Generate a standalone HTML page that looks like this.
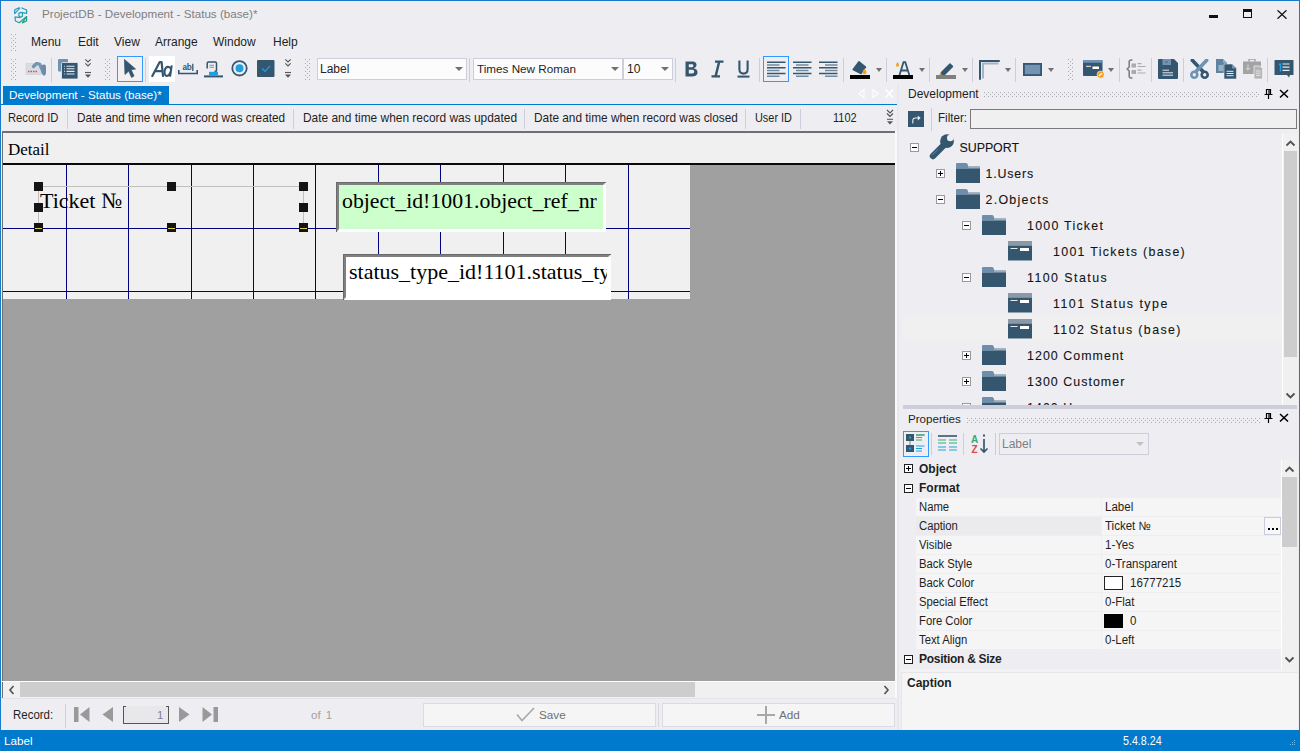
<!DOCTYPE html>
<html><head><meta charset="utf-8">
<style>
*{box-sizing:border-box;margin:0;padding:0}
html,body{width:1300px;height:751px;overflow:hidden;background:#EEEEF2;font-family:"Liberation Sans",sans-serif;font-size:12px;color:#1E1E1E}
.a{position:absolute}
.t{position:absolute;white-space:nowrap;line-height:14px}
.sep{position:absolute;width:1px;background:#CCCEDB}
.grip{position:absolute;width:5px;background:conic-gradient(at 1px 1px,transparent 75%,#A9A9B1 0) 0 0/4px 4px,conic-gradient(at 1px 1px,transparent 75%,#A9A9B1 0) 2px 2px/4px 4px}
.ddarr{position:absolute;width:0;height:0;border-left:4px solid transparent;border-right:4px solid transparent;border-top:4px solid #717171}
.hg{position:absolute;background:#000080}
.hd{position:absolute;width:9px;height:9px;background:#141414}
.tree{position:absolute;white-space:nowrap;font-size:12.4px;letter-spacing:1.05px;line-height:14px;color:#141414;-webkit-text-stroke:0.1px #141414}
.bx{position:absolute;width:9px;height:9px;border:1px solid #9A9A9A;background:#FCFCFC}
.bx:before{content:"";position:absolute;left:1px;top:3px;width:5px;height:1px;background:#000}
.bx.p:after{content:"";position:absolute;left:3px;top:1px;width:1px;height:5px;background:#000}
.pr{position:absolute;left:916px;width:365px;height:18px;background:#F5F5F5}
.pv{position:absolute;left:1101px;width:180px;height:18px;background:#F5F5F5}
.pn{position:absolute;white-space:nowrap;line-height:14px;left:919px;transform:scaleX(.94);transform-origin:0 0}
.pvv{position:absolute;white-space:nowrap;line-height:14px;left:1105px;transform:scaleX(.96);transform-origin:0 0}
</style></head><body>
<!-- window border -->
<div class="a" style="left:0;top:0;width:1300px;height:751px;border:1px solid #1979CA;border-bottom:none"></div>

<!-- TITLE BAR -->
<svg class="a" style="left:14px;top:7px" width="14" height="17" viewBox="0 0 14 17">
 <defs><linearGradient id="lg" gradientUnits="userSpaceOnUse" x1="0" y1="0" x2="13" y2="17"><stop offset="0" stop-color="#1E9BE6"/><stop offset="0.55" stop-color="#20A0B0"/><stop offset="1" stop-color="#2E9E63"/></linearGradient></defs>
 <g fill="none" stroke="url(#lg)" stroke-width="1.25" stroke-linejoin="round">
 <path d="M0.7 6.6 V2.7 L5 0.7 L5.6 1.4 Z"/>
 <path d="M7.4 0.7 L12.6 3 V6.3 L6.7 5.3 L4.9 6.4 V9.1 L6.6 10.2 L8.4 9.2 V6.3"/>
 <path d="M0.6 9.8 L6.4 10.7 M0.9 10 L1.5 14 L5.3 15.8 L12.6 9.6"/>
 <path d="M8.3 15.8 L12.6 14 V9.6 Z"/>
 </g>
</svg>
<div class="t" style="left:42px;top:7px;color:#7F7F7F;font-size:11.65px">ProjectDB - Development - Status (base)*</div>
<div class="a" style="left:1209px;top:15px;width:9px;height:3px;background:#111"></div>
<div class="a" style="left:1243px;top:9px;width:9px;height:9px;border:1px solid #111;border-top:3px solid #111"></div>
<svg class="a" style="left:1277px;top:10px" width="10" height="9" viewBox="0 0 10 9"><path d="M0.5 0.3 L9.5 8.7 M9.5 0.3 L0.5 8.7" stroke="#111" stroke-width="1.3"/></svg>

<!-- MENU BAR -->
<div class="grip" style="left:11px;top:34px;height:17px"></div>
<div class="t" style="left:31px;top:35px">Menu</div>
<div class="t" style="left:78px;top:35px">Edit</div>
<div class="t" style="left:114px;top:35px">View</div>
<div class="t" style="left:155px;top:35px">Arrange</div>
<div class="t" style="left:213px;top:35px">Window</div>
<div class="t" style="left:273px;top:35px">Help</div>

<!-- TOOLBAR -->
<div class="grip" style="left:11px;top:59px;height:22px"></div>
<svg class="a" style="left:25px;top:62px" width="22" height="14" viewBox="0 0 22 14">
 <rect x="1" y="1.5" width="15" height="11" fill="#D9DDE1" stroke="#C8CCD0" stroke-width="0.6"/>
 <path d="M3 9.5h1.5M5.5 9.5h1.5M8 9.5h1.5M10.5 9.5h1.5" stroke="#E0474C" stroke-width="1.4"/>
 <path d="M8.5 4.5 L11.5 1.5 L14.5 2 L18 9.5 L19 12" fill="none" stroke="#7393B3" stroke-width="3.2" stroke-linecap="round" stroke-linejoin="round"/>
 <rect x="16.5" y="2.5" width="4.5" height="10" rx="2" fill="#6B8BAA"/>
</svg>
<div class="sep" style="left:51px;top:58px;height:24px"></div>
<svg class="a" style="left:58px;top:59px" width="20" height="20" viewBox="0 0 20 20">
 <rect x="0" y="0" width="10" height="12.5" rx="1" fill="#6E93B3"/>
 <rect x="3.5" y="3.5" width="16.5" height="16.5" rx="1.2" fill="#34566F" stroke="#EEEEF2" stroke-width="0.8"/>
 <path d="M6.2 7.2h0.8M8.5 7.2h8M6.2 9.8h0.8M8.5 9.8h8M6.2 12.4h0.8M8.5 12.4h8M6.2 15h0.8M8.5 15h8" stroke="#E6EBEF" stroke-width="1.1"/>
</svg>
<svg class="a" style="left:84px;top:58px" width="8" height="21" viewBox="0 0 8 21">
 <path d="M1.3 1.3 L4 4 L6.7 1.3 M1.3 5.3 L4 8 L6.7 5.3" fill="none" stroke="#555" stroke-width="1.1"/>
 <path d="M1 14.5 H7" stroke="#555" stroke-width="1.1"/><path d="M1 16.5 H7 L4 19.8 Z" fill="#555"/>
</svg>
<div class="grip" style="left:105px;top:59px;height:22px"></div>
<div class="a" style="left:117px;top:56px;width:26px;height:26px;border:1px solid #3399FF;background:#F2F0F0"></div>
<svg class="a" style="left:123px;top:59px" width="14" height="20" viewBox="0 0 14 20">
 <path d="M1.5 0.5 L12.5 10 L8 10.6 L11 17 L8.6 18.4 L5.7 12 L2 15.5 Z" fill="#34566F" stroke="#34566F" stroke-width="0.8" stroke-linejoin="round"/>
</svg>
<div class="sep" style="left:145px;top:58px;height:24px"></div>
<div class="a" style="left:149px;top:56px;width:26px;height:26px;background:#FFFFFF"></div>
<svg class="a" style="left:151px;top:61px" width="23" height="16" viewBox="0 0 23 16">
 <path d="M1.3 15 L8.6 1.2 L10.6 1.2 L12 15 M4 10.2 H11.4" fill="none" stroke="#34566F" stroke-width="2.2" stroke-linejoin="round" stroke-linecap="round"/>
 <path d="M20.6 5.2 L19.2 14.8 M20 8.6 C19.4 5.6 16.5 5.2 15 6.7 C13.2 8.6 13 12.8 14.4 14.2 C15.9 15.6 18.6 14.8 19.4 11" fill="none" stroke="#34566F" stroke-width="2.1" stroke-linecap="round"/>
</svg>
<svg class="a" style="left:178px;top:63px" width="20" height="12" viewBox="0 0 20 12">
 <text x="4.5" y="7.3" font-family="Liberation Sans" font-size="8.2" font-weight="bold" fill="#34566F" letter-spacing="-0.2">ab</text>
 <path d="M14.8 0.8 V8" stroke="#34566F" stroke-width="1.3"/>
 <path d="M0.8 7 V10.5 H19.2 V7" fill="none" stroke="#34566F" stroke-width="1.6"/>
</svg>
<svg class="a" style="left:204px;top:61px" width="19" height="17" viewBox="0 0 19 17">
 <path d="M3.2 7.5 V2.3 Q3.2 1 4.5 1 H11.2 Q12.5 1 12.5 2.3 V9.5 Q12.5 10.3 11.7 10.3 H10.5" fill="none" stroke="#34566F" stroke-width="1.5"/>
 <path d="M5.5 4.3 H10 M5.5 6.3 H10" stroke="#7393B3" stroke-width="1"/>
 <rect x="5" y="10.8" width="9" height="3.4" fill="#1BA1E2"/>
 <rect x="0" y="14.4" width="19" height="2" fill="#34566F"/>
</svg>
<svg class="a" style="left:230px;top:60px" width="19" height="17" viewBox="0 0 19 17">
 <circle cx="9.5" cy="8.3" r="7.2" fill="none" stroke="#34566F" stroke-width="1.8"/>
 <circle cx="9.5" cy="8.3" r="4" fill="#1BA1E2"/>
</svg>
<svg class="a" style="left:257px;top:60px" width="18" height="17" viewBox="0 0 18 17">
 <rect x="0" y="0" width="17.5" height="17" rx="1" fill="#34566F"/>
 <path d="M5 8.5 L8 11.3 L13 5.8" fill="none" stroke="#1BA1E2" stroke-width="1.2"/>
</svg>
<svg class="a" style="left:284px;top:58px" width="8" height="21" viewBox="0 0 8 21">
 <path d="M1.3 1.3 L4 4 L6.7 1.3 M1.3 5.3 L4 8 L6.7 5.3" fill="none" stroke="#555" stroke-width="1.1"/>
 <path d="M1 14.5 H7" stroke="#555" stroke-width="1.1"/><path d="M1 16.5 H7 L4 19.8 Z" fill="#555"/>
</svg>
<div class="grip" style="left:305px;top:59px;height:22px"></div>
<!-- combos -->
<div class="a" style="left:317px;top:58px;width:150px;height:22px;border:1px solid #CCCEDB;background:#FCFCFC"></div>
<div class="t" style="left:320px;top:62px">Label</div>
<div class="ddarr" style="left:455px;top:67px"></div>
<div class="sep" style="left:469px;top:58px;height:24px"></div>
<div class="a" style="left:473px;top:58px;width:150px;height:22px;border:1px solid #CCCEDB;background:#FCFCFC"></div>
<div class="t" style="left:477px;top:62px;font-size:11.7px">Times New Roman</div>
<div class="ddarr" style="left:611px;top:67px"></div>
<div class="a" style="left:623px;top:58px;width:50px;height:22px;border:1px solid #CCCEDB;background:#FCFCFC"></div>
<div class="t" style="left:627px;top:62px">10</div>
<div class="ddarr" style="left:661px;top:67px"></div>
<div class="sep" style="left:675px;top:58px;height:24px"></div>
<!-- B I U -->
<svg class="a" style="left:684px;top:60px" width="15" height="18" viewBox="0 0 15 18">
 <path d="M1.5 1.5 H8 C11.5 1.5 12.5 3.2 12.5 5 C12.5 6.8 11.3 7.8 9.5 8.2 C12 8.5 13.5 10 13.5 12.3 C13.5 14.6 12 16.5 8.5 16.5 H1.5 Z" fill="#34566F"/>
 <path d="M4.8 4.3 H7.8 C9 4.3 9.4 5 9.4 5.8 C9.4 6.6 9 7.2 7.8 7.2 H4.8 Z M4.8 9.8 H8.3 C9.6 9.8 10.2 10.5 10.2 11.6 C10.2 12.7 9.6 13.6 8.3 13.6 H4.8 Z" fill="#EEEEF2"/>
</svg>
<svg class="a" style="left:711px;top:60px" width="13" height="18" viewBox="0 0 13 18">
 <path d="M4 1.6 H12.5 M0.5 16.4 H9 M8.2 1.6 L4.6 16.4" fill="none" stroke="#34566F" stroke-width="2.4"/>
</svg>
<svg class="a" style="left:737px;top:60px" width="13" height="18" viewBox="0 0 13 18">
 <path d="M2.4 0.5 V9.3 C2.4 12.2 4 13.6 6.5 13.6 C9 13.6 10.6 12.2 10.6 9.3 V0.5" fill="none" stroke="#34566F" stroke-width="2.1"/>
 <rect x="0.5" y="15.6" width="12" height="2" fill="#34566F"/>
</svg>
<div class="sep" style="left:759px;top:58px;height:24px"></div>
<div class="a" style="left:763px;top:56px;width:26px;height:26px;border:1px solid #3399FF"></div>
<svg class="a" style="left:767px;top:61px" width="19" height="17" viewBox="0 0 19 17"><path d="M0 1.2 H18.5 M0 6.8 H18.5 M0 12.4 H18.5" stroke="#34566F" stroke-width="1.5"/><path d="M0 4.0 H12.5 M0 9.6 H12.5 M0 15.2 H12.5" stroke="#6F8BA3" stroke-width="1.5"/></svg>
<svg class="a" style="left:793px;top:61px" width="19" height="17" viewBox="0 0 19 17"><path d="M0 1.2 H18.5 M0 6.8 H18.5 M0 12.4 H18.5" stroke="#34566F" stroke-width="1.5"/><path d="M3 4.0 H15.5 M3 9.6 H15.5 M3 15.2 H15.5" stroke="#6F8BA3" stroke-width="1.5"/></svg>
<svg class="a" style="left:819px;top:61px" width="19" height="17" viewBox="0 0 19 17"><path d="M0 1.2 H18.5 M0 6.8 H18.5 M0 12.4 H18.5" stroke="#34566F" stroke-width="1.5"/><path d="M6 4.0 H18.5 M6 9.6 H18.5 M6 15.2 H18.5" stroke="#6F8BA3" stroke-width="1.5"/></svg>
<div class="sep" style="left:843px;top:58px;height:24px"></div>
<!-- fill -->
<svg class="a" style="left:850px;top:61px" width="21" height="18" viewBox="0 0 21 18">
 <path d="M9 0.8 L15.5 6 L11 12.5 L3.2 8.5 Z" fill="#34566F" stroke="#34566F" stroke-width="1.5" stroke-linejoin="round"/>
 <path d="M14.5 7.5 C13 9.5 12.5 10.5 12.5 11.5 C12.5 12.5 13.5 13.3 14.5 13.3 C15.5 13.3 16.5 12.5 16.5 11.5 C16.5 10.5 16 9.5 14.5 7.5 Z" fill="#F4A11D"/>
 <rect x="0" y="14" width="20" height="4" fill="#000"/>
</svg>
<div class="ddarr" style="left:876px;top:68px;border-width:4px 3.5px 0 3.5px"></div>
<div class="sep" style="left:886px;top:58px;height:24px"></div>
<svg class="a" style="left:893px;top:61px" width="21" height="18" viewBox="0 0 21 18">
 <path d="M4.5 1 C3.5 2.5 3 3.3 3 4.2 C3 5 3.7 5.7 4.5 5.7 C5.3 5.7 6 5 6 4.2 C6 3.3 5.5 2.5 4.5 1 Z" fill="#F4A11D"/>
 <path d="M6.5 14 L10.5 1.2 L12.3 1.2 L16.3 14 M8 9.5 H14.8" fill="none" stroke="#34566F" stroke-width="1.8"/>
 <rect x="0" y="14" width="20" height="4" fill="#000"/>
</svg>
<div class="ddarr" style="left:919px;top:68px;border-width:4px 3.5px 0 3.5px"></div>
<div class="sep" style="left:929px;top:58px;height:24px"></div>
<svg class="a" style="left:936px;top:61px" width="21" height="18" viewBox="0 0 21 18">
 <path d="M5.5 11.5 L14 3 L16.5 5.5 L8 14 L5 14 Z" fill="#34566F" stroke="#34566F" stroke-width="1.5" stroke-linejoin="round"/>
 <path d="M3.5 12.5 L5.5 12.5 L5.5 14 L3.5 14 Z" fill="#F4A11D"/>
 <rect x="0" y="14" width="20" height="4" fill="#808080"/>
</svg>
<div class="ddarr" style="left:962px;top:68px;border-width:4px 3.5px 0 3.5px"></div>
<div class="sep" style="left:972px;top:58px;height:24px"></div>
<svg class="a" style="left:978px;top:59px" width="22" height="21" viewBox="0 0 22 21">
 <path d="M2 20 V2 H21" fill="none" stroke="#34566F" stroke-width="2" stroke-linecap="round"/>
 <path d="M5 19.5 V4.5 H20.5" fill="none" stroke="#A4B4C4" stroke-width="2"/>
</svg>
<div class="ddarr" style="left:1005px;top:68px;border-width:4px 3.5px 0 3.5px"></div>
<div class="sep" style="left:1015px;top:58px;height:24px"></div>
<svg class="a" style="left:1023px;top:63px" width="19" height="13" viewBox="0 0 19 13">
 <rect x="0.9" y="0.9" width="17.2" height="11.2" fill="#7393B3" stroke="#34566F" stroke-width="1.8"/>
</svg>
<div class="ddarr" style="left:1048px;top:68px;border-width:4px 3.5px 0 3.5px"></div>
<div class="grip" style="left:1068px;top:59px;height:22px"></div>
<svg class="a" style="left:1083px;top:60px" width="22" height="19" viewBox="0 0 22 19">
 <rect x="0" y="0" width="19.5" height="16" rx="1" fill="#34566F"/>
 <rect x="0" y="0" width="19.5" height="2.8" rx="0.8" fill="#6E93B3"/>
 <path d="M3 6.3 H8" stroke="#E6EBEF" stroke-width="1"/>
 <rect x="9.5" y="6.5" width="6.5" height="2.5" fill="#FFFFFF"/>
 <circle cx="17.6" cy="14.6" r="3.6" fill="#F4A11D" stroke="#EEEEF2" stroke-width="0.6"/>
 <path d="M16 15.8 L19 13.2" stroke="#fff" stroke-width="1.2"/>
</svg>
<div class="ddarr" style="left:1108px;top:68px;border-width:4px 3.5px 0 3.5px"></div>
<div class="sep" style="left:1119px;top:58px;height:24px"></div>
<svg class="a" style="left:1126px;top:59px" width="21" height="20" viewBox="0 0 21 20">
 <path d="M6.5 1 H5 Q3.2 1 3.2 3 V8 L1.2 10 L3.2 12 V17 Q3.2 19 5 19 H6.5" fill="none" stroke="#808080" stroke-width="1.6"/>
 <rect x="5.5" y="4.5" width="4.5" height="4" fill="#ABABAB"/><rect x="5.5" y="11" width="4.5" height="4" fill="#ABABAB"/>
 <path d="M11.5 4.7 H15.5 M11.5 7.5 H19.5 M11.5 11.2 H15.5 M11.5 14 H19.5" stroke="#ABABAB" stroke-width="1.2"/>
</svg>
<div class="sep" style="left:1151px;top:58px;height:24px"></div>
<svg class="a" style="left:1158px;top:59px" width="20" height="20" viewBox="0 0 20 20">
 <path d="M1 0 H16 L20 4 V19 Q20 20 19 20 H1 Q0 20 0 19 V1 Q0 0 1 0 Z" fill="#34566F"/>
 <rect x="4.5" y="0" width="8.5" height="6" fill="#7393B3"/>
 <path d="M7.5 3 H9.5" stroke="#34566F" stroke-width="1"/>
 <path d="M4.5 11.2 H11 M4.5 13.8 H15 M4.5 16.2 H15" stroke="#E6EBEF" stroke-width="1"/>
</svg>
<div class="sep" style="left:1183px;top:58px;height:24px"></div>
<svg class="a" style="left:1190px;top:59px" width="19" height="20" viewBox="0 0 19 20">
 <path d="M2.3 1.3 L13 12.5" stroke="#34566F" stroke-width="3.6" stroke-linecap="round"/>
 <path d="M16.7 1.3 L6 12.5" stroke="#6E93B3" stroke-width="3.6" stroke-linecap="round"/>
 <circle cx="4.3" cy="15.7" r="3" fill="none" stroke="#6E93B3" stroke-width="2.6"/>
 <circle cx="14.7" cy="15.7" r="3" fill="none" stroke="#34566F" stroke-width="2.6"/>
 <circle cx="9.5" cy="8.5" r="0.9" fill="#6E93B3"/>
</svg>
<svg class="a" style="left:1216px;top:59px" width="21" height="20" viewBox="0 0 21 20">
 <path d="M0 0 H7 L11 4 V14 H0 Z" fill="#5F84A2"/>
 <path d="M7 0 L11 4 H7 Z" fill="#8FAAC0"/>
 <path d="M2.5 7 H7 M2.5 9 H7 M2.5 11 H7" stroke="#E6EBEF" stroke-width="0.9"/>
 <path d="M8 5 H16 L20.5 9.5 V20 H8 Z" fill="#34566F" stroke="#EEEEF2" stroke-width="0.6"/>
 <path d="M16 5 L20.5 9.5 H16 Z" fill="#7393B3"/>
 <path d="M10.5 12.3 H17.5 M10.5 14.5 H17.5 M10.5 16.7 H17.5" stroke="#E6EBEF" stroke-width="1"/>
</svg>
<svg class="a" style="left:1242px;top:59px" width="21" height="20" viewBox="0 0 21 20">
 <path d="M1 2.5 H19 V15 H1 Z" fill="#A3A3A3"/>
 <path d="M7 2.5 V1 Q7 0 8 0 H12 Q13 0 13 1 V2.5" fill="none" stroke="#A3A3A3" stroke-width="1.5"/>
 <path d="M6 5.5 V11 M3.8 9 L6 11.2 L8.2 9" fill="none" stroke="#D8D8D8" stroke-width="1"/>
 <path d="M12 7 H18 L20.5 9.5 V20 H12 Z" fill="#B5B5B5" stroke="#EEEEF2" stroke-width="0.8"/>
 <path d="M14 12 H18.5 M14 14.2 H18.5 M14 16.4 H18.5" stroke="#E8E8E8" stroke-width="0.9"/>
</svg>
<div class="sep" style="left:1267px;top:58px;height:24px"></div>
<svg class="a" style="left:1274px;top:59px" width="20" height="21" viewBox="0 0 20 21">
 <path d="M1 1 H19 Q19.5 1 19.5 1.5 V15.5 Q19.5 16 19 16 H16 L15 18.5 L13 16 H1 Q0.5 16 0.5 15.5 V1.5 Q0.5 1 1 1 Z" fill="#34566F"/>
 <path d="M6.5 4.5 V12.5 M5 6 L6.5 4.5" fill="none" stroke="#1BA1E2" stroke-width="1.5"/>
 <path d="M8.5 5 H15.5 M8.5 8.2 H15.5 M8.5 11.4 H15.5" stroke="#E6EBEF" stroke-width="1.2"/>
</svg>


<!-- DOCUMENT TAB -->
<div class="a" style="left:3px;top:86px;width:166px;height:18px;background:#007ACC"></div>
<div class="t" style="left:9px;top:88px;color:#fff;font-size:11.65px">Development - Status (base)*</div>
<div class="a" style="left:1px;top:104px;width:896px;height:1px;background:#007ACC"></div>
<svg class="a" style="left:858px;top:89px" width="36" height="9" viewBox="0 0 36 9">
 <path d="M6 0.5 L1 4.5 L6 8.5 Z" fill="none" stroke="#FFFFFF" stroke-width="1.1"/>
 <path d="M15 0.5 L20 4.5 L15 8.5 Z" fill="none" stroke="#FFFFFF" stroke-width="1.1"/>
 <path d="M27.5 0.5 L35 8.5 M35 0.5 L27.5 8.5" stroke="#FFFFFF" stroke-width="1.6"/>
</svg>

<!-- RECORD HEADER BAR -->
<div class="t hdr" style="left:8px;top:111px;font-size:12.4px;transform:scaleX(0.902);transform-origin:0 0">Record ID</div>
<div class="sep" style="left:67px;top:109px;height:20px"></div>
<div class="t hdr" style="left:77px;top:111px;font-size:12.4px;transform:scaleX(0.95);transform-origin:0 0">Date and time when record was created</div>
<div class="sep" style="left:293px;top:109px;height:20px"></div>
<div class="t hdr" style="left:303px;top:111px;font-size:12.4px;transform:scaleX(0.962);transform-origin:0 0">Date and time when record was updated</div>
<div class="sep" style="left:524px;top:109px;height:20px"></div>
<div class="t hdr" style="left:534px;top:111px;font-size:12.4px;transform:scaleX(0.955);transform-origin:0 0">Date and time when record was closed</div>
<div class="sep" style="left:745px;top:109px;height:20px"></div>
<div class="t hdr" style="left:755px;top:111px;font-size:12.4px;transform:scaleX(0.88);transform-origin:0 0">User ID</div>
<div class="sep" style="left:800px;top:109px;height:20px"></div>
<div class="t hdr" style="left:833px;top:111px;font-size:12.4px;transform:scaleX(0.885);transform-origin:0 0">1102</div>
<svg class="a" style="left:886px;top:109px" width="8" height="17" viewBox="0 0 8 17">
 <path d="M1 1 L4 4 L7 1 M1 4.5 L4 7.5 L7 4.5" fill="none" stroke="#555" stroke-width="1.2"/>
 <path d="M1 10.3 H7" stroke="#555" stroke-width="1"/><path d="M1 12.2 H7 L4 15.5 Z" fill="#555"/>
</svg>

<!-- FORM AREA -->
<!-- form frame -->
<div class="a" style="left:2px;top:131px;width:894px;height:550px;background:#A0A0A0"></div>
<div class="a" style="left:2px;top:131px;width:894px;height:2px;background:#6F6F6F"></div>
<div class="a" style="left:2px;top:131px;width:1px;height:567px;background:#6F6F6F"></div>
<div class="a" style="left:895px;top:131px;width:2px;height:567px;background:#FAFAFA"></div>
<div class="a" style="left:3px;top:133px;width:892px;height:30px;background:#F0F0F0"></div>
<div class="t" style="left:8px;top:141px;font-family:'Liberation Serif',serif;font-size:17px;line-height:18px;color:#000">Detail</div>
<div class="a" style="left:3px;top:163px;width:892px;height:2px;background:#0A0A0A"></div>
<!-- grid -->
<div class="a" style="left:3px;top:165px;width:687px;height:134px;background:#F0F0F0"></div>
<div class="hg" style="left:66px;top:165px;width:1px;height:134px"></div>
<div class="hg" style="left:128px;top:165px;width:1px;height:134px"></div>
<div class="hg" style="left:191px;top:165px;width:1px;height:134px"></div>
<div class="hg" style="left:253px;top:165px;width:1px;height:134px"></div>
<div class="hg" style="left:315px;top:165px;width:1px;height:134px"></div>
<div class="hg" style="left:378px;top:165px;width:1px;height:134px"></div>
<div class="hg" style="left:440px;top:165px;width:1px;height:134px"></div>
<div class="hg" style="left:503px;top:165px;width:1px;height:134px"></div>
<div class="hg" style="left:565px;top:165px;width:1px;height:134px"></div>
<div class="hg" style="left:628px;top:165px;width:1px;height:134px"></div>
<div class="hg" style="left:3px;top:228px;width:687px;height:1px"></div>
<div class="hg" style="left:3px;top:291px;width:687px;height:1px"></div>
<!-- label selection -->
<div class="a" style="left:38px;top:186px;width:266px;height:42px;border:1px solid #C0C0C0;border-bottom:none"></div>
<div class="t" style="left:40px;top:189px;font-family:'Liberation Serif',serif;font-size:22px;line-height:24px;color:#000">Ticket №</div>
<div class="hd" style="left:34px;top:182px"></div>
<div class="hd" style="left:167px;top:182px"></div>
<div class="hd" style="left:299px;top:182px"></div>
<div class="hd" style="left:34px;top:203px"></div>
<div class="hd" style="left:299px;top:203px"></div>
<div class="hd" style="left:34px;top:223px"></div>
<div class="hd" style="left:167px;top:223px"></div>
<div class="hd" style="left:299px;top:223px"></div>
<div class="a" style="left:35px;top:228px;width:7px;height:1px;background:#E0D040"></div>
<div class="a" style="left:168px;top:228px;width:7px;height:1px;background:#E0D040"></div>
<div class="a" style="left:300px;top:228px;width:7px;height:1px;background:#E0D040"></div>
<!-- textbox 1 -->
<div class="a" style="left:336px;top:182px;width:270px;height:50px;background:#CCFFCC;border-style:solid;border-width:3px 3px 3px 3px;border-color:#808080 #F0F0F0 #F0F0F0 #808080"></div>
<div class="a" style="left:336px;top:182px;width:270px;height:1px;background:#6A6A6A"></div>
<div class="a" style="left:336px;top:182px;width:1px;height:50px;background:#6A6A6A"></div>
<div class="a" style="left:339px;top:229px;width:267px;height:3px;background:#FFFFFF"></div>
<div class="a" style="left:603px;top:185px;width:3px;height:47px;background:#FFFFFF"></div>
<div class="t" style="left:342px;top:189px;font-family:'Liberation Serif',serif;font-size:21.8px;line-height:24px;color:#000">object_id!1001.object_ref_nr</div>
<!-- textbox 2 -->
<div class="a" style="left:343px;top:254px;width:268px;height:46px;background:#FFFFFF;border-style:solid;border-width:3px 3px 3px 3px;border-color:#808080 #F0F0F0 #F0F0F0 #808080;overflow:hidden">
 <div class="t" style="left:3px;top:3px;font-family:'Liberation Serif',serif;font-size:22px;line-height:24px;color:#000">status_type_id!1101.status_type</div>
</div>
<div class="a" style="left:343px;top:254px;width:268px;height:1px;background:#6A6A6A"></div>
<div class="a" style="left:343px;top:254px;width:1px;height:46px;background:#6A6A6A"></div>
<div class="a" style="left:607px;top:257px;width:4px;height:43px;background:#FFFFFF"></div>
<div class="a" style="left:346px;top:297px;width:265px;height:3px;background:#FFFFFF"></div>
<!-- h scrollbar -->
<div class="a" style="left:2px;top:681px;width:894px;height:1px;background:#FFFFFF"></div>
<div class="a" style="left:3px;top:682px;width:892px;height:16px;background:#F0F0F0"></div>
<div class="a" style="left:20px;top:682px;width:675px;height:15px;background:#CDCDCD"></div>
<svg class="a" style="left:8px;top:685px" width="8" height="10" viewBox="0 0 8 10"><path d="M5.5 1 L2 5 L5.5 9" fill="none" stroke="#505050" stroke-width="1.6"/></svg>
<svg class="a" style="left:882px;top:685px" width="8" height="10" viewBox="0 0 8 10"><path d="M2.5 1 L6 5 L2.5 9" fill="none" stroke="#505050" stroke-width="1.6"/></svg>
<div class="a" style="left:2px;top:698px;width:894px;height:1px;background:#E4E4E7"></div>
<!-- nav bar -->
<div class="t" style="left:13px;top:708px;font-size:12.4px;transform:scaleX(.925);transform-origin:0 0">Record:</div>
<div class="sep" style="left:65px;top:704px;height:24px;background:#D0D0D8"></div>
<svg class="a" style="left:73px;top:706px" width="147" height="17" viewBox="0 0 147 17">
 <rect x="1" y="1" width="4.5" height="15" fill="#999"/><path d="M16.5 1 L7 8.5 L16.5 16 Z" fill="#999"/>
 <path d="M40 1 L29.5 8.5 L40 16 Z" fill="#999"/>
 <path d="M106 1 L116.5 8.5 L106 16 Z" fill="#999"/>
 <path d="M129.5 1 L139 8.5 L129.5 16 Z" fill="#999"/><rect x="140.5" y="1" width="4.5" height="15" fill="#999"/>
</svg>
<div class="a" style="left:123px;top:706px;width:46px;height:18px;border:1px solid #555;border-top:none;background:#E8E8EA;box-shadow:inset 0 1px 0 #E8E8EA"></div><div class="a" style="left:123px;top:706px;width:3px;height:1px;background:#555"></div><div class="a" style="left:166px;top:706px;width:3px;height:1px;background:#555"></div>
<div class="t" style="left:157px;top:708px;font-size:11.5px;color:#8080A0">1</div>
<div class="t" style="left:311px;top:708px;font-size:11.5px;color:#A0A0A0;word-spacing:2px">of 1</div>
<div class="a" style="left:423px;top:703px;width:233px;height:24px;border:1px solid #DADAE2;background:#F5F5F5"></div>
<svg class="a" style="left:516px;top:707px" width="19" height="15" viewBox="0 0 19 15"><path d="M1 7.5 L6 13.5 L18 1" fill="none" stroke="#A8A8A8" stroke-width="1.6"/></svg>
<div class="t" style="left:539px;top:708px;font-size:11.7px;color:#707070">Save</div>
<div class="sep" style="left:658px;top:703px;height:24px;background:#D8D8E0"></div>
<div class="a" style="left:662px;top:703px;width:233px;height:24px;border:1px solid #DADAE2;background:#F5F5F5"></div>
<svg class="a" style="left:757px;top:706px" width="18" height="18" viewBox="0 0 18 18"><path d="M9 0 V18 M0 9 H18" stroke="#A8A8A8" stroke-width="2"/></svg>
<div class="t" style="left:779px;top:708px;font-size:11.7px;color:#707070">Add</div>


<!-- RIGHT PANEL -->
<!-- divider -->
<div class="a" style="left:897px;top:84px;width:2px;height:646px;background:#E7E7ED"></div>
<!-- Development header -->
<div class="t" style="left:908px;top:87px;color:#1E1E1E">Development</div>
<div class="a" style="left:984px;top:92px;width:276px;height:5px;background:conic-gradient(at 1px 1px,transparent 75%,#A9A9B1 0) 0 0/4px 4px,conic-gradient(at 1px 1px,transparent 75%,#A9A9B1 0) 2px 2px/4px 4px"></div>
<svg class="a" style="left:1264px;top:89px" width="9" height="10" viewBox="0 0 9 10"><path d="M2.5 0.5 H6.5 V5.5 H2.5 Z M0.5 5.5 H8.5 M4.5 5.5 V10 M5 1 V5" fill="none" stroke="#000" stroke-width="1.2"/></svg>
<svg class="a" style="left:1279px;top:89px" width="10" height="9" viewBox="0 0 10 9"><path d="M1 1 L9 8.5 M9 1 L1 8.5" stroke="#000" stroke-width="1.5"/></svg>
<!-- filter row -->
<svg class="a" style="left:908px;top:111px" width="16" height="16" viewBox="0 0 16 16"><rect width="16" height="16" fill="#34566F"/><path d="M4.8 12.5 V9.5 Q4.8 7 7.3 7 H10" fill="none" stroke="#E8ECEF" stroke-width="1.1"/><path d="M9.8 4.6 L12.6 7 L9.8 9.4 Z" fill="#E8ECEF"/></svg>
<div class="sep" style="left:931px;top:108px;height:23px"></div>
<div class="t" style="left:938px;top:111px;font-size:12px;transform:scaleX(.965);transform-origin:0 0">Filter:</div>
<div class="a" style="left:970px;top:109px;width:327px;height:20px;border:1px solid #7A7A7A;background:#F0F0F0"></div>
<!-- tree -->
<div class="a" style="left:1282px;top:134px;width:1px;height:271px;background:#FFFFFF"></div>
<div class="a" style="left:1283px;top:134px;width:15px;height:271px;background:#F0F0F0"></div>
<div class="a" style="left:1284px;top:151px;width:13px;height:206px;background:#CDCDCD"></div>
<svg class="a" style="left:1285px;top:139px" width="11" height="8" viewBox="0 0 11 8"><path d="M1.5 6.5 L5.5 2.5 L9.5 6.5" fill="none" stroke="#505050" stroke-width="1.8"/></svg>
<svg class="a" style="left:1285px;top:392px" width="11" height="8" viewBox="0 0 11 8"><path d="M1.5 1.5 L5.5 5.5 L9.5 1.5" fill="none" stroke="#505050" stroke-width="1.8"/></svg>
<div class="a" style="left:903px;top:133px;width:379px;height:272px;overflow:hidden">
 <div class="bx" style="left:7px;top:10px"></div>
 <svg class="a" style="left:26px;top:1px" width="26" height="26" viewBox="0 0 26 26">
  <path d="M4 22 L15.5 10.5" stroke="#34566F" stroke-width="6.4" stroke-linecap="round"/>
  <circle cx="18" cy="7.2" r="6.9" fill="#34566F"/>
  <circle cx="21.2" cy="4" r="3.2" fill="#EEEEF2"/>
  <path d="M21.2 0.8 L27 -2 L27 6 L24.4 4 Z" fill="#EEEEF2"/>
  <path d="M3.2 21 L9 15.5" stroke="#7C98B2" stroke-width="0.7"/>
 </svg>
 <div class="tree" style="left:56.5px;top:8px;letter-spacing:-0.03px">SUPPORT</div>

 <div class="bx p" style="left:33px;top:36px"></div>
 <svg class="a folder" style="left:53px;top:30px" width="24" height="20"><path d="M0 4 V1 Q0 0 1 0 H10 Q11 0 11.5 1 L12.5 3.5 H24 V5.5 H0 Z" fill="#6E8EAD"/><rect x="12" y="3.5" width="12" height="2" fill="#9EABB7"/><rect x="0" y="5.5" width="24" height="14.5" fill="#34566F"/></svg>
 <div class="tree" style="left:82.5px;top:34px;letter-spacing:0.82px">1.Users</div>

 <div class="bx" style="left:33px;top:62px"></div>
 <svg class="a" style="left:53px;top:56px" width="24" height="20"><path d="M0 4 V1 Q0 0 1 0 H10 Q11 0 11.5 1 L12.5 3.5 H24 V5.5 H0 Z" fill="#6E8EAD"/><rect x="12" y="3.5" width="12" height="2" fill="#9EABB7"/><rect x="0" y="5.5" width="24" height="14.5" fill="#34566F"/></svg>
 <div class="tree" style="left:82.5px;top:60px;letter-spacing:1.3px">2.Objects</div>

 <div class="bx" style="left:59px;top:88px"></div>
 <svg class="a" style="left:79px;top:82px" width="24" height="20"><path d="M0 4 V1 Q0 0 1 0 H10 Q11 0 11.5 1 L12.5 3.5 H24 V5.5 H0 Z" fill="#6E8EAD"/><rect x="12" y="3.5" width="12" height="2" fill="#9EABB7"/><rect x="0" y="5.5" width="24" height="14.5" fill="#34566F"/></svg>
 <div class="tree" style="left:124px;top:86px;letter-spacing:1.25px">1000 Ticket</div>

 <svg class="a" style="left:105px;top:108px" width="24" height="20"><rect x="0" y="0" width="24" height="4.5" fill="#8C9AA8"/><rect x="0" y="4.5" width="24" height="15" fill="#34566F"/><rect x="2.5" y="7" width="7" height="1" fill="#E6EBEF"/><rect x="12" y="7" width="9" height="3" fill="#fff"/></svg>
 <div class="tree" style="left:150px;top:112px;letter-spacing:1.31px">1001 Tickets (base)</div>

 <div class="bx" style="left:59px;top:140px"></div>
 <svg class="a" style="left:79px;top:134px" width="24" height="20"><path d="M0 4 V1 Q0 0 1 0 H10 Q11 0 11.5 1 L12.5 3.5 H24 V5.5 H0 Z" fill="#6E8EAD"/><rect x="12" y="3.5" width="12" height="2" fill="#9EABB7"/><rect x="0" y="5.5" width="24" height="14.5" fill="#34566F"/></svg>
 <div class="tree" style="left:124px;top:138px;letter-spacing:1.45px">1100 Status</div>

 <div class="a" style="left:0;top:182px;width:379px;height:26px;background:#F0F0F0"></div>
 <svg class="a" style="left:105px;top:160px" width="24" height="20"><rect x="0" y="0" width="24" height="4.5" fill="#8C9AA8"/><rect x="0" y="4.5" width="24" height="15" fill="#34566F"/><rect x="2.5" y="7" width="7" height="1" fill="#E6EBEF"/><rect x="12" y="7" width="9" height="3" fill="#fff"/></svg>
 <div class="tree" style="left:150px;top:164px;letter-spacing:1.48px">1101 Status type</div>

 <svg class="a" style="left:105px;top:186px" width="24" height="20"><rect x="0" y="0" width="24" height="4.5" fill="#8C9AA8"/><rect x="0" y="4.5" width="24" height="15" fill="#34566F"/><rect x="2.5" y="7" width="7" height="1" fill="#E6EBEF"/><rect x="12" y="7" width="9" height="3" fill="#fff"/></svg>
 <div class="tree" style="left:150px;top:190px;letter-spacing:1.39px">1102 Status (base)</div>

 <div class="bx p" style="left:59px;top:218px"></div>
 <svg class="a" style="left:79px;top:212px" width="24" height="20"><path d="M0 4 V1 Q0 0 1 0 H10 Q11 0 11.5 1 L12.5 3.5 H24 V5.5 H0 Z" fill="#6E8EAD"/><rect x="12" y="3.5" width="12" height="2" fill="#9EABB7"/><rect x="0" y="5.5" width="24" height="14.5" fill="#34566F"/></svg>
 <div class="tree" style="left:124px;top:216px">1200 Comment</div>

 <div class="bx p" style="left:59px;top:244px"></div>
 <svg class="a" style="left:79px;top:238px" width="24" height="20"><path d="M0 4 V1 Q0 0 1 0 H10 Q11 0 11.5 1 L12.5 3.5 H24 V5.5 H0 Z" fill="#6E8EAD"/><rect x="12" y="3.5" width="12" height="2" fill="#9EABB7"/><rect x="0" y="5.5" width="24" height="14.5" fill="#34566F"/></svg>
 <div class="tree" style="left:124px;top:242px">1300 Customer</div>

 <div class="bx p" style="left:59px;top:270px"></div>
 <svg class="a" style="left:79px;top:264px" width="24" height="20"><path d="M0 4 V1 Q0 0 1 0 H10 Q11 0 11.5 1 L12.5 3.5 H24 V5.5 H0 Z" fill="#6E8EAD"/><rect x="12" y="3.5" width="12" height="2" fill="#9EABB7"/><rect x="0" y="5.5" width="24" height="14.5" fill="#34566F"/></svg>
 <div class="tree" style="left:124px;top:268px">1400 Users</div>
</div>

<!-- splitter -->
<div class="a" style="left:903px;top:405px;width:394px;height:4px;background:#CCCEDB"></div>
<!-- Properties header -->
<div class="t" style="left:908px;top:412px;font-size:11.6px">Properties</div>
<div class="a" style="left:967px;top:418px;width:293px;height:5px;background:conic-gradient(at 1px 1px,transparent 75%,#A9A9B1 0) 0 0/4px 4px,conic-gradient(at 1px 1px,transparent 75%,#A9A9B1 0) 2px 2px/4px 4px"></div>
<svg class="a" style="left:1264px;top:413px" width="9" height="10" viewBox="0 0 9 10"><path d="M2.5 0.5 H6.5 V5.5 H2.5 Z M0.5 5.5 H8.5 M4.5 5.5 V10 M5 1 V5" fill="none" stroke="#000" stroke-width="1.2"/></svg>
<svg class="a" style="left:1279px;top:413px" width="10" height="9" viewBox="0 0 10 9"><path d="M1 1 L9 8.5 M9 1 L1 8.5" stroke="#000" stroke-width="1.5"/></svg>
<!-- properties toolbar -->
<div class="a" style="left:903px;top:431px;width:26px;height:26px;border:1px solid #3399FF"></div>
<svg class="a" style="left:906px;top:434px" width="20" height="20" viewBox="0 0 20 20">
 <rect x="0" y="0" width="8" height="7" fill="#34566F"/><rect x="0" y="11" width="8" height="7" fill="#34566F"/>
 <path d="M4 7 V11" stroke="#808080" stroke-width="1"/>
 <path d="M2.5 3.5 L4 2 L5.5 3.5 L4 5 Z" fill="#3BA776"/><path d="M2.5 14.5 L4 13 L5.5 14.5 L4 16 Z" fill="#1BA1E2"/>
 <path d="M10 1 H18.5 M10 3.5 H16 M10 6 H16" stroke="#3BA776" stroke-width="1.1"/>
 <path d="M10 1 H18.5" stroke="#3BA776" stroke-width="1.2"/>
 <path d="M10 12 H18.5 M10 14.5 H16 M10 17 H16" stroke="#1BA1E2" stroke-width="1.1"/>
</svg>
<div class="sep" style="left:931px;top:433px;height:22px"></div>
<svg class="a" style="left:938px;top:435px" width="20" height="18" viewBox="0 0 20 18">
 <path d="M0 1 H19" stroke="#34566F" stroke-width="1.6"/>
 <path d="M0 5 H8 M11 5 H19 M0 8 H8 M11 8 H19" stroke="#3BA776" stroke-width="1.2"/>
 <path d="M0 12 H8 M11 12 H19 M0 15 H8 M11 15 H19" stroke="#1BA1E2" stroke-width="1.2"/>
</svg>
<div class="sep" style="left:963px;top:433px;height:22px"></div>
<svg class="a" style="left:971px;top:434px" width="19" height="20" viewBox="0 0 19 20">
 <text x="0" y="8.5" font-family="Liberation Sans" font-size="10" font-weight="bold" fill="#3BA776">A</text>
 <text x="0.5" y="19" font-family="Liberation Sans" font-size="10" font-weight="bold" fill="#E0474C">Z</text>
 <path d="M13 5 V18 M9.5 14.5 L13 18 L16.5 14.5" fill="none" stroke="#34566F" stroke-width="1.7"/>
 <rect x="12" y="0.5" width="2" height="2" fill="#34566F"/>
</svg>
<div class="sep" style="left:995px;top:433px;height:22px"></div>
<div class="a" style="left:999px;top:433px;width:150px;height:22px;border:1px solid #CCCEDB;background:#EEEEF2"></div>
<div class="t" style="left:1002px;top:437px;color:#808080">Label</div>
<div class="ddarr" style="left:1136px;top:442px;border-top-color:#C0C0C0"></div>

<!-- property grid -->
<div class="bx p" style="left:904px;top:464px;border-color:#1E1E1E"></div>
<div class="t" style="left:919px;top:462px;font-weight:bold">Object</div>
<div class="bx" style="left:904px;top:484px;border-color:#1E1E1E"></div>
<div class="t" style="left:919px;top:481px;font-weight:bold">Format</div>

<div class="a" style="left:916px;top:498px;width:185px;height:18px;background:#F5F5F5"></div>
<div class="a" style="left:1102px;top:498px;width:179px;height:18px;background:#F5F5F5"></div>
<div class="a" style="left:916px;top:517px;width:185px;height:18px;background:#EBEBEE"></div>
<div class="a" style="left:1102px;top:517px;width:179px;height:18px;background:#F5F5F5"></div>
<div class="a" style="left:916px;top:536px;width:185px;height:18px;background:#F5F5F5"></div>
<div class="a" style="left:1102px;top:536px;width:179px;height:18px;background:#F5F5F5"></div>
<div class="a" style="left:916px;top:555px;width:185px;height:18px;background:#F5F5F5"></div>
<div class="a" style="left:1102px;top:555px;width:179px;height:18px;background:#F5F5F5"></div>
<div class="a" style="left:916px;top:574px;width:185px;height:18px;background:#F5F5F5"></div>
<div class="a" style="left:1102px;top:574px;width:179px;height:18px;background:#F5F5F5"></div>
<div class="a" style="left:916px;top:593px;width:185px;height:18px;background:#F5F5F5"></div>
<div class="a" style="left:1102px;top:593px;width:179px;height:18px;background:#F5F5F5"></div>
<div class="a" style="left:916px;top:612px;width:185px;height:18px;background:#F5F5F5"></div>
<div class="a" style="left:1102px;top:612px;width:179px;height:18px;background:#F5F5F5"></div>
<div class="a" style="left:916px;top:631px;width:185px;height:18px;background:#F5F5F5"></div>
<div class="a" style="left:1102px;top:631px;width:179px;height:18px;background:#F5F5F5"></div>

<div class="pn" style="top:500px">Name</div><div class="pvv" style="top:500px">Label</div>
<div class="pn" style="top:519px">Caption</div><div class="pvv" style="top:519px">Ticket №</div>
<div class="pn" style="top:538px">Visible</div><div class="pvv" style="top:538px">1-Yes</div>
<div class="pn" style="top:557px">Back Style</div><div class="pvv" style="top:557px">0-Transparent</div>
<div class="pn" style="top:576px">Back Color</div><div class="pvv" style="top:576px;left:1130px">16777215</div>
<div class="pn" style="top:595px">Special Effect</div><div class="pvv" style="top:595px">0-Flat</div>
<div class="pn" style="top:614px">Fore Color</div><div class="pvv" style="top:614px;left:1130px">0</div>
<div class="pn" style="top:633px">Text Align</div><div class="pvv" style="top:633px">0-Left</div>
<div class="a" style="left:1104px;top:576px;width:19px;height:14px;border:1px solid #222;background:#fff"></div>
<div class="a" style="left:1104px;top:614px;width:19px;height:14px;background:#000"></div>
<div class="a" style="left:1264px;top:517px;width:17px;height:18px;border:1px solid #C8CCDA;background:#F8F8F8"></div>
<div class="a" style="left:1268px;top:528px;width:2px;height:2px;background:#000"></div><div class="a" style="left:1272px;top:528px;width:2px;height:2px;background:#000"></div><div class="a" style="left:1276px;top:528px;width:2px;height:2px;background:#000"></div>
<div class="bx" style="left:904px;top:655px;border-color:#1E1E1E"></div>
<div class="t" style="left:919px;top:652px;font-weight:bold;letter-spacing:-0.28px">Position &amp; Size</div>
<!-- grid scrollbar -->
<div class="a" style="left:1281px;top:460px;width:1px;height:209px;background:#FFFFFF"></div>
<div class="a" style="left:1282px;top:460px;width:15px;height:209px;background:#F0F0F0"></div>
<div class="a" style="left:1282px;top:477px;width:15px;height:70px;background:#CDCDCD"></div>
<svg class="a" style="left:1284px;top:465px" width="11" height="8" viewBox="0 0 11 8"><path d="M1.5 6.5 L5.5 2.5 L9.5 6.5" fill="none" stroke="#505050" stroke-width="1.8"/></svg>
<svg class="a" style="left:1284px;top:656px" width="11" height="8" viewBox="0 0 11 8"><path d="M1.5 1.5 L5.5 5.5 L9.5 1.5" fill="none" stroke="#505050" stroke-width="1.8"/></svg>
<!-- description -->
<div class="a" style="left:901px;top:669px;width:396px;height:3px;background:#F2F2F4"></div>
<div class="a" style="left:901px;top:672px;width:397px;height:58px;background:#F5F5F5;border-top:1px solid #E6E6EA;border-left:1px solid #E6E6EA"></div>
<div class="t" style="left:907px;top:676px;font-weight:bold">Caption</div>


<!-- STATUS BAR -->
<div class="a" style="left:0;top:730px;width:1300px;height:21px;background:#007ACC"></div>
<div class="t" style="left:4px;top:734px;color:#fff;font-size:11.7px">Label</div>
<div class="t" style="left:1123px;top:734px;color:#fff;font-size:12px;transform:scaleX(.89);transform-origin:0 0">5.4.8.24</div>
<div class="a" style="left:1288px;top:738px;width:8px;height:8px;background:conic-gradient(at 1px 1px,transparent 75%,#6BC0F0 0) 0 0/2px 2px;clip-path:polygon(100% 0,100% 100%,0 100%)"></div>
</body></html>
